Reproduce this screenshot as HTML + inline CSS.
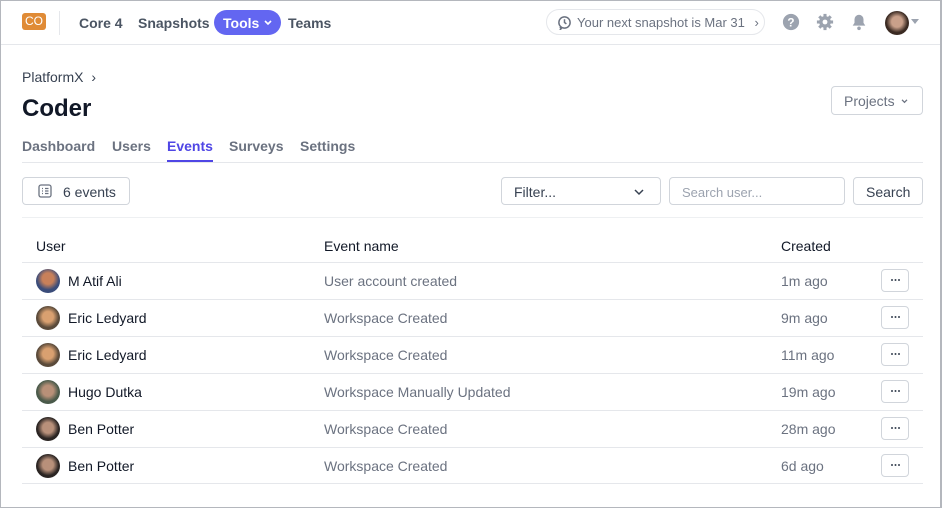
<!DOCTYPE html>
<html><head><meta charset="utf-8"><style>
*{box-sizing:border-box;margin:0;padding:0}
body{width:942px;height:508px;overflow:hidden;background:#fff;font-family:"Liberation Sans",sans-serif;color:#111827}
.frame{position:absolute;left:0;top:0;width:942px;height:508px;border:1px solid #b4b7bd;border-right-width:2px}
.hdr{position:absolute;left:1px;top:1px;right:2px;height:44px;border-bottom:1px solid #e5e7eb}
.a{position:absolute}
.nav{font-size:14px;color:#4b5563;font-weight:bold;top:14px}
.btn{position:absolute;border:1px solid #d1d5db;border-radius:4px;background:#fff;font-size:14px;color:#374151}
.row{position:absolute;left:22px;width:901px;height:37px;border-top:1px solid #e5e7eb;font-size:14px}
.row span{position:absolute;top:10px}
.av{position:absolute;left:14px;top:6px;width:24px;height:24px;border-radius:50%}
.more{position:absolute;left:859px;top:6px;width:28px;height:23px;border:1px solid #d1d5db;border-radius:4px}
.more:after{content:"";position:absolute;left:9px;top:9px;width:2px;height:2px;background:#374151;border-radius:50%;box-shadow:3.5px 0 #374151,7px 0 #374151}
</style></head><body>
<div class="frame"></div>
<div class="hdr">
 <div class="a" style="left:21px;top:12px;width:24px;height:17px;background:#e08b36;border-radius:3px;color:#fff;font-size:12px;text-align:center;line-height:17px">CO</div>
 <div class="a" style="left:58px;top:10px;width:1px;height:24px;background:#e5e7eb"></div>
 <div class="a nav" style="left:78px">Core 4</div>
 <div class="a nav" style="left:137px">Snapshots</div>
 <div class="a" style="left:213px;top:9px;width:67px;height:25px;background:#6366f1;border-radius:13px;color:#fff;font-size:14px;font-weight:bold;padding:5px 0 0 9px">Tools
  <svg style="position:absolute;left:50px;top:10px" width="8" height="6" viewBox="0 0 8 6" fill="none" stroke="#fff" stroke-width="1.6"><path d="M1 1l3 3 3-3"/></svg></div>
 <div class="a nav" style="left:287px">Teams</div>
 <div class="a" style="left:545px;top:8px;width:219px;height:26px;border:1px solid #e5e7eb;border-radius:13px;font-size:13px;color:#6b7280;padding:5px 0 0 30px">Your next snapshot is Mar 31 <span style="margin-left:6px">›</span>
  <svg style="position:absolute;left:10px;top:5px" width="15" height="15" viewBox="0 0 16 16" fill="none" stroke="#6b7280" stroke-width="1.6"><path d="M14 8a6 6 0 1 1-6-6 6 6 0 0 1 6 6"/><path d="M8 4.5V8l2 1.5"/><path d="M3 13l1.5 1.5L3 16"/></svg></div>
 <svg class="a" style="left:781px;top:12px" width="18" height="18" viewBox="0 0 20 20"><circle cx="10" cy="10" r="9" fill="#9ca3af"/><text x="10" y="15" font-size="13" font-weight="bold" fill="#fff" text-anchor="middle" font-family="Liberation Sans">?</text></svg>
 <svg class="a" style="left:815px;top:12px" width="18" height="18" viewBox="0 0 20 20"><g fill="#9ca3af"><circle cx="10" cy="10" r="6.5"/><rect x="8.3" y="1" width="3.4" height="18"/><rect x="1" y="8.3" width="18" height="3.4"/><rect x="8.3" y="1" width="3.4" height="18" transform="rotate(45 10 10)"/><rect x="8.3" y="1" width="3.4" height="18" transform="rotate(-45 10 10)"/></g><circle cx="10" cy="10" r="2.7" fill="#fff"/></svg>
 <svg class="a" style="left:849px;top:12px" width="18" height="18" viewBox="0 0 20 20" fill="#9ca3af"><path d="M10 2a5 5 0 0 0-5 5v4l-2 3h14l-2-3V7a5 5 0 0 0-5-5z"/><circle cx="10" cy="17" r="2"/></svg>
 <div class="a" style="left:884px;top:10px;width:24px;height:24px;border-radius:50%;background:radial-gradient(circle at 50% 45%,#c9a08a 0 30%,#3a2a22 60%)"></div>
 <div class="a" style="left:910px;top:18px;border:4px solid transparent;border-top:5px solid #9ca3af"></div>
</div>
<div class="a" style="left:22px;top:69px;font-size:14px;color:#374151">PlatformX <span style="margin-left:4px">›</span></div>
<div class="a" style="left:22px;top:95px;font-size:24px;font-weight:bold;color:#111827">Coder</div>
<div class="btn" style="left:831px;top:86px;width:92px;height:29px;padding:6px 0 0 12px;color:#6b7280">Projects
 <svg style="position:absolute;left:69px;top:12px" width="7" height="5" viewBox="0 0 8 6" fill="none" stroke="#6b7280" stroke-width="1.5"><path d="M1 1l3 3 3-3"/></svg></div>
<div class="a" style="left:22px;top:138px;font-size:14px;color:#6b7280;font-weight:bold;width:901px;height:25px;border-bottom:1px solid #e5e7eb">
 <span class="a" style="left:0">Dashboard</span><span class="a" style="left:90px">Users</span>
 <span class="a" style="left:145px;color:#4f46e5;border-bottom:2px solid #4f46e5;height:24px">Events</span>
 <span class="a" style="left:207px">Surveys</span><span class="a" style="left:278px">Settings</span></div>
<div class="btn" style="left:22px;top:177px;width:108px;height:28px;padding:6px 0 0 40px">6 events
 <svg style="position:absolute;left:15px;top:6px" width="14" height="14" viewBox="0 0 14 14" fill="none" stroke="#6b7280" stroke-width="1.3"><rect x="1" y="1" width="12" height="12" rx="2"/><path d="M4 4.5h1M7 4.5h3.5M4 7h1M7 7h3.5M4 9.5h1M7 9.5h3.5"/></svg></div>
<div class="btn" style="left:501px;top:177px;width:160px;height:28px;padding:6px 0 0 12px">Filter...
 <svg style="position:absolute;right:16px;top:10px" width="10" height="8" viewBox="0 0 10 8" fill="none" stroke="#374151" stroke-width="1.5"><path d="M1 2l4 4 4-4"/></svg></div>
<div class="btn" style="left:669px;top:177px;width:176px;height:28px;padding:7px 0 0 12px;color:#9ca3af;font-size:13px">Search user...</div>
<div class="btn" style="left:853px;top:177px;width:70px;height:28px;padding:6px 0 0 12px">Search</div>
<div class="a" style="left:22px;top:217px;width:901px;height:1px;background:#eef0f2"></div>
<div class="row" style="top:225px;border:none;height:37px"><span style="left:14px;top:13px">User</span><span style="left:302px;top:13px">Event name</span><span style="left:759px;top:13px">Created</span></div>
<div class="row" style="top:262px"><div class="av" style="background:radial-gradient(circle at 50% 40%,#c8805a 0 30%,#3a4c7a 60%)"></div><span style="left:46px">M Atif Ali</span><span style="left:302px;color:#6b7280">User account created</span><span style="left:759px;color:#6b7280">1m ago</span><div class="more"></div></div>
<div class="row" style="top:299px"><div class="av" style="background:radial-gradient(circle at 50% 45%,#d9a070 0 30%,#5a4a3a 60%)"></div><span style="left:46px">Eric Ledyard</span><span style="left:302px;color:#6b7280">Workspace Created</span><span style="left:759px;color:#6b7280">9m ago</span><div class="more"></div></div>
<div class="row" style="top:336px"><div class="av" style="background:radial-gradient(circle at 50% 45%,#d9a070 0 30%,#5a4a3a 60%)"></div><span style="left:46px">Eric Ledyard</span><span style="left:302px;color:#6b7280">Workspace Created</span><span style="left:759px;color:#6b7280">11m ago</span><div class="more"></div></div>
<div class="row" style="top:373px"><div class="av" style="background:radial-gradient(circle at 50% 45%,#b89078 0 30%,#4a5a4a 60%)"></div><span style="left:46px">Hugo Dutka</span><span style="left:302px;color:#6b7280">Workspace Manually Updated</span><span style="left:759px;color:#6b7280">19m ago</span><div class="more"></div></div>
<div class="row" style="top:410px"><div class="av" style="background:radial-gradient(circle at 50% 45%,#b8907a 0 30%,#2a2422 60%)"></div><span style="left:46px">Ben Potter</span><span style="left:302px;color:#6b7280">Workspace Created</span><span style="left:759px;color:#6b7280">28m ago</span><div class="more"></div></div>
<div class="row" style="top:447px;border-bottom:1px solid #e5e7eb"><div class="av" style="background:radial-gradient(circle at 50% 45%,#b8907a 0 30%,#2a2422 60%)"></div><span style="left:46px">Ben Potter</span><span style="left:302px;color:#6b7280">Workspace Created</span><span style="left:759px;color:#6b7280">6d ago</span><div class="more"></div></div>
</body></html>
